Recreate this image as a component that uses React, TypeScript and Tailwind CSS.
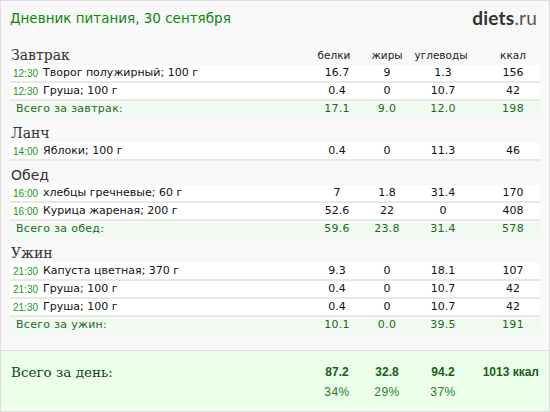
import React from "react";

type Item = { t: string; name: string; b: string; f: string; c: string; k: string };
type Section = { title: string; serif: boolean; items: Item[]; total?: { label: string; b: string; f: string; c: string; k: string } };

const sections: Section[] = [
  {
    title: "Завтрак",
    serif: true,
    items: [
      { t: "12:30", name: "Творог полужирный; 100 г", b: "16.7", f: "9", c: "1.3", k: "156" },
      { t: "12:30", name: "Груша; 100 г", b: "0.4", f: "0", c: "10.7", k: "42" },
    ],
    total: { label: "Всего за завтрак:", b: "17.1", f: "9.0", c: "12.0", k: "198" },
  },
  {
    title: "Ланч",
    serif: true,
    items: [{ t: "14:00", name: "Яблоки; 100 г", b: "0.4", f: "0", c: "11.3", k: "46" }],
  },
  {
    title: "Обед",
    serif: false,
    items: [
      { t: "16:00", name: "хлебцы гречневые; 60 г", b: "7", f: "1.8", c: "31.4", k: "170" },
      { t: "16:00", name: "Курица жареная; 200 г", b: "52.6", f: "22", c: "0", k: "408" },
    ],
    total: { label: "Всего за обед:", b: "59.6", f: "23.8", c: "31.4", k: "578" },
  },
  {
    title: "Ужин",
    serif: true,
    items: [
      { t: "21:30", name: "Капуста цветная; 370 г", b: "9.3", f: "0", c: "18.1", k: "107" },
      { t: "21:30", name: "Груша; 100 г", b: "0.4", f: "0", c: "10.7", k: "42" },
      { t: "21:30", name: "Груша; 100 г", b: "0.4", f: "0", c: "10.7", k: "42" },
    ],
    total: { label: "Всего за ужин:", b: "10.1", f: "0.0", c: "39.5", k: "191" },
  },
];

const grid = "grid grid-cols-[1fr_50px_50px_62px_66px]";

function Nums({ b, f, c, k }: { b: string; f: string; c: string; k: string }) {
  return (
    <>
      <div className="text-center">{b}</div>
      <div className="text-center">{f}</div>
      <div className="text-center">{c}</div>
      <div className="pl-[12px] text-center">{k}</div>
    </>
  );
}

export default function App() {
  return (
    <div className="w-[550px] h-[412px] bg-[#f8f8f8] border border-[#dedede] flex flex-col overflow-hidden">
      <div className="h-[40px] flex items-start justify-between pl-[9px] pr-[12px] pt-[7px]">
        <div className="text-[13.5px] text-[#0a8a0a] font-['DejaVu_Sans',sans-serif] leading-[20px]">
          Дневник питания, 30 сентября
        </div>
        <div className="font-['Lato',sans-serif] text-[19px] leading-[20px] tracking-[0.2px]">
          <span className="font-bold text-[#333333]">diets</span>
          <span className="text-[#555555]">.ru</span>
        </div>
      </div>
      <div className="px-[9px] flex flex-col">
        {sections.map((s, si) => (
          <div key={si} className="flex flex-col">
            <div className={`${grid} h-[24px] items-center pt-[4px]`}>
              <div
                className={
                  s.serif
                    ? "text-[14px] text-[#333333] font-['DejaVu_Serif',serif] pl-[1px]"
                    : "text-[14px] text-[#333333] font-['DejaVu_Sans',sans-serif] pl-[1px]"
                }
              >
                {s.title}
              </div>
              {si === 0 && (
                <>
                  <div className="text-center text-[10.5px] text-[#222] font-['DejaVu_Sans',sans-serif] -ml-[6px]">белки</div>
                  <div className="text-center text-[10.5px] text-[#222] font-['DejaVu_Sans',sans-serif]">жиры</div>
                  <div className="text-center text-[10.5px] text-[#222] font-['DejaVu_Sans',sans-serif] -ml-[4px]">углеводы</div>
                  <div className="pl-[12px] text-center text-[10.5px] text-[#222] font-['DejaVu_Sans',sans-serif]">ккал</div>
                </>
              )}
            </div>
            {s.items.map((it, ii) => (
              <div
                key={ii}
                className={`${grid} h-[18px] items-center bg-white border-b-2 border-[#e8e8e8] text-[11px] text-[#111] font-['DejaVu_Sans',sans-serif]`}
              >
                <div className="flex items-center pl-[3px]">
                  <span className="w-[30px] text-[10px] text-[#139a13] font-['Liberation_Sans',sans-serif]">{it.t}</span>
                  <span>{it.name}</span>
                </div>
                <Nums b={it.b} f={it.f} c={it.c} k={it.k} />
              </div>
            ))}
            {s.total && (
              <div
                className={`${grid} h-[16px] mb-[2px] items-center bg-[#f0faf0] text-[11px] text-[#1c6a1c] font-['DejaVu_Sans',sans-serif] tracking-[0.3px]`}
              >
                <div className="pl-[6px]">{s.total.label}</div>
                <Nums b={s.total.b} f={s.total.f} c={s.total.c} k={s.total.k} />
              </div>
            )}
          </div>
        ))}
      </div>
      <div className="mt-auto h-[61px] border-t border-[#dddddd] bg-[#ebffeb] px-[9px] pt-[11px]">
        <div className={`${grid} items-start`}>
          <div className="pl-[1px] text-[13.5px] leading-[20px] text-[#0a4a0a] font-['DejaVu_Serif',serif]">Всего за день:</div>
          <div className="flex flex-col items-center text-[#1a5e1a] font-['Liberation_Sans',sans-serif]">
            <span className="text-[12px] font-bold leading-[20px]">87.2</span>
            <span className="text-[12px] leading-[20px] tracking-[0.5px] text-[#2a7a2a]">34%</span>
          </div>
          <div className="flex flex-col items-center text-[#1a5e1a] font-['Liberation_Sans',sans-serif]">
            <span className="text-[12px] font-bold leading-[20px]">32.8</span>
            <span className="text-[12px] leading-[20px] tracking-[0.5px] text-[#2a7a2a]">29%</span>
          </div>
          <div className="flex flex-col items-center text-[#1a5e1a] font-['Liberation_Sans',sans-serif]">
            <span className="text-[12px] font-bold leading-[20px]">94.2</span>
            <span className="text-[12px] leading-[20px] tracking-[0.5px] text-[#2a7a2a]">37%</span>
          </div>
          <div className="text-right pr-[1px] text-[12px] font-bold leading-[20px] text-[#1a5e1a] font-['Liberation_Sans',sans-serif]">
            1013 ккал
          </div>
        </div>
      </div>
    </div>
  );
}
